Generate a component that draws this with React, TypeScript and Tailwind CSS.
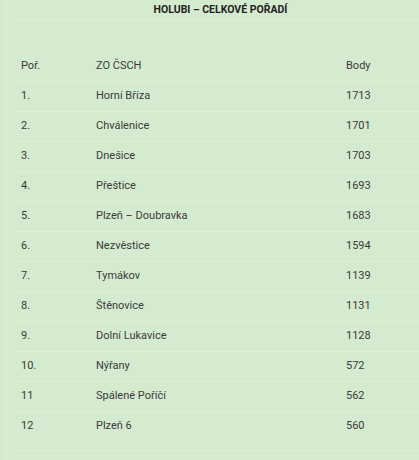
import React from 'react';

const rows = [
  ['1.', 'Horní Bříza', '1713'],
  ['2.', 'Chválenice', '1701'],
  ['3.', 'Dnešice', '1703'],
  ['4.', 'Přeštice', '1693'],
  ['5.', 'Plzeň – Doubravka', '1683'],
  ['6.', 'Nezvěstice', '1594'],
  ['7.', 'Tymákov', '1139'],
  ['8.', 'Štěnovice', '1131'],
  ['9.', 'Dolní Lukavice', '1128'],
  ['10.', 'Nýřany', '572'],
  ['11', 'Spálené Poříčí', '562'],
  ['12', 'Plzeň 6', '560'],
];

const App: React.FC = () => {
  return (
    <div
      className="w-[419px] h-[460px] overflow-hidden bg-[#d5ebd0] flex"
      style={{ fontFamily: 'Roboto, "Noto Sans", sans-serif' }}
    >
      {/* left edge strip */}
      <div className="w-[6px] shrink-0" />
      <div className="w-px shrink-0 bg-[#dff0dc]" />
      <div className="w-[9px] shrink-0" />

      <div className="flex-1 min-w-0 flex flex-col">
        <div className="h-5 border-b border-[#ddefd9] flex items-center justify-center">
          <h2 className="text-[10.5px] font-bold text-[#222] pl-[6px]">HOLUBI – CELKOVÉ POŘADÍ</h2>
        </div>
        <div className="h-5 border-b border-[#d9edd5]" />

        <table className="w-full mt-[1px] text-[11px] text-[#3a3a3a] border-collapse">
          <thead>
            <tr className="h-[40px] border-b border-[#ddefd9]">
              <th className="font-normal text-left pl-[5px] w-[80px] pt-[10px]">Poř.</th>
              <th className="font-normal text-left w-[250px] pt-[10px]">ZO ČSCH</th>
              <th className="font-normal text-left pt-[10px]">Body</th>
            </tr>
          </thead>
          <tbody>
            {rows.map(([pos, name, pts], i) => (
              <tr key={pos} className={i < rows.length - 1 ? 'h-[30px] border-b border-[#ddefd9]' : 'h-[30px]'}>
                <td className="pl-[5px]">{pos}</td>
                <td>{name}</td>
                <td>{pts}</td>
              </tr>
            ))}
          </tbody>
        </table>
        <div className="mt-[9px] border-b border-[#ddefd9]" />
      </div>
    </div>
  );
};

export default App;
